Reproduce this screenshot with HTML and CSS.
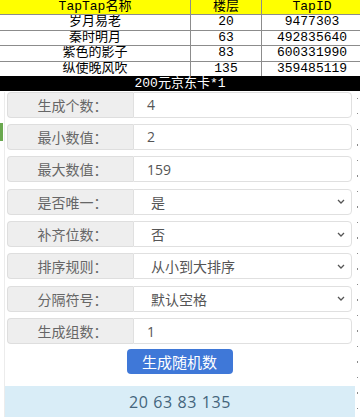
FILE: index.html
```html
<!DOCTYPE html>
<html lang="zh">
<head>
<meta charset="utf-8">
<title>随机数生成</title>
<link rel="stylesheet" href="styles.css">
</head>
<body>
<table class="rank">
  <thead>
    <tr><th class="c1">TapTap名称</th><th class="c2">楼层</th><th class="c3">TapID</th></tr>
  </thead>
  <tbody>
    <tr><td>岁月易老</td><td>20</td><td>9477303</td></tr>
    <tr><td>秦时明月</td><td>63</td><td>492835640</td></tr>
    <tr><td>紫色的影子</td><td>83</td><td>600331990</td></tr>
    <tr><td>纵使晚风吹</td><td>135</td><td>359485119</td></tr>
  </tbody>
</table>
<div class="prize">200元京东卡*1</div>
<div class="panel">
  <div class="row"><span class="lbl">生成个数：</span><span class="val">4</span></div>
  <div class="row"><span class="lbl">最小数值：</span><span class="val">2</span></div>
  <div class="row"><span class="lbl">最大数值：</span><span class="val">159</span></div>
  <div class="row"><span class="lbl">是否唯一：</span><span class="val sel"><span class="txt">是</span><svg class="arrow" viewBox="0 0 8 5" width="8" height="5"><path d="M1 1l3 3 3-3" fill="none" stroke="#555" stroke-width="1.3"/></svg></span></div>
  <div class="row"><span class="lbl">补齐位数：</span><span class="val sel"><span class="txt">否</span><svg class="arrow" viewBox="0 0 8 5" width="8" height="5"><path d="M1 1l3 3 3-3" fill="none" stroke="#555" stroke-width="1.3"/></svg></span></div>
  <div class="row"><span class="lbl">排序规则：</span><span class="val sel"><span class="txt">从小到大排序</span><svg class="arrow" viewBox="0 0 8 5" width="8" height="5"><path d="M1 1l3 3 3-3" fill="none" stroke="#555" stroke-width="1.3"/></svg></span></div>
  <div class="row"><span class="lbl">分隔符号：</span><span class="val sel"><span class="txt">默认空格</span><svg class="arrow" viewBox="0 0 8 5" width="8" height="5"><path d="M1 1l3 3 3-3" fill="none" stroke="#555" stroke-width="1.3"/></svg></span></div>
  <div class="row"><span class="lbl">生成组数：</span><span class="val">1</span></div>
  <button class="btn" type="button">生成随机数</button>
  <div class="result">20 63 83 135</div>
</div>
</body>
</html>
```
FILE: styles.css
```css
html, body {
  margin: 0;
  padding: 0;
}
body {
  width: 360px;
  height: 417px;
  overflow: hidden;
  background: #fff;
  font-family: "Open Sans", "Noto Sans CJK SC", sans-serif;
}

.rank {
  width: 360px;
  border-collapse: collapse;
  table-layout: fixed;
  font: 13px/14px "Liberation Mono", "Noto Sans CJK SC", monospace;
  color: #000;
}
.rank th,
.rank td {
  height: 14.5px;
  padding: 0;
  border: 1px solid #8c8c8c;
  text-align: center;
  font-weight: normal;
  white-space: nowrap;
  overflow: hidden;
}
.rank th {
  height: 14px;
  background: #ffff00;
  border-top: 0;
}
.rank th:first-child,
.rank td:first-child {
  border-left: 0;
}
.rank th:last-child,
.rank td:last-child {
  border-right: 0;
}
.rank tbody tr:last-child td {
  border-bottom: 0;
}
.c1 { width: 190px; }
.c2 { width: 70px; }
.c3 { width: 100px; }

.prize {
  height: 15px;
  background: #000;
  color: #fff;
  text-align: center;
  font: 13px/15px "Liberation Mono", "Noto Sans CJK SC", monospace;
}

.panel {
  position: relative;
  box-sizing: border-box;
  width: 353px;
  margin-left: 4px;
  padding: 0 5px 0 2px;
  border-left: 1px solid #ececec;
  height: 326px;
}
.panel::before {
  content: "";
  position: absolute;
  left: -5px;
  top: 31px;
  width: 3px;
  height: 18px;
  background: #6aa84f;
}
.panel::after {
  content: "";
  position: absolute;
  right: -1px;
  top: 6px;
  bottom: 0;
  width: 1px;
  background: repeating-linear-gradient(to bottom, #8a8a8a 0 1px, transparent 1px 15.5px);
}

.row {
  display: flex;
  height: 26px;
  margin-top: 6.4px;
}
.row:first-child {
  margin-top: 0.5px;
}
.lbl {
  box-sizing: border-box;
  width: 126px;
  display: flex;
  align-items: center;
  justify-content: center;
  padding-left: 4px;
  background: #eeeeee;
  border: 1px solid #dedede;
  border-right: 0;
  border-radius: 4px 0 0 4px;
  color: #666;
  font-size: 14px;
}
.val {
  flex: 1;
  box-sizing: border-box;
  display: flex;
  align-items: center;
  padding-left: 13px;
  padding-right: 6px;
  background: #fff;
  border: 1px solid #e0e0e0;
  border-radius: 0 4px 4px 0;
  color: #555;
  font-size: 14px;
}
.sel {
  padding-left: 17px;
}
.sel .txt {
  flex: 1;
}
.arrow {
  display: block;
}

.btn {
  display: block;
  width: 106px;
  height: 25px;
  margin: 5px auto 0;
  padding: 0;
  border: 0;
  border-radius: 4px;
  background: #3f78d8;
  color: #fff;
  font-family: "Noto Sans CJK SC", sans-serif;
  font-size: 15px;
  line-height: 25px;
}

.result {
  height: 40px;
  margin: 12px -3px 0 -2px;
  background: #d9edf7;
  color: #44657c;
  text-align: center;
  font-size: 16px;
  line-height: 33px;
  letter-spacing: 0.6px;
}
```
